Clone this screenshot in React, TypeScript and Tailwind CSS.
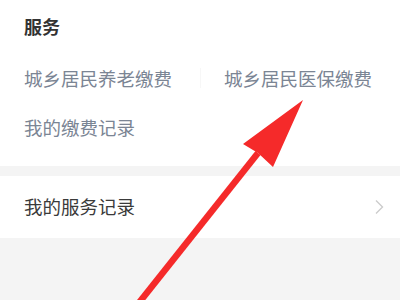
export default function App() {
  return (
    <div
      className="relative w-[400px] h-[300px] overflow-hidden bg-[#f4f4f4]"
      style={{ fontFamily: '"Noto Sans CJK SC", "Noto Sans", sans-serif' }}
    >
      {/* 服务 */}
      <div className="bg-white pt-[13px] pb-[26px]">
        <h2 className="px-6 text-[18px] leading-[26px] font-bold text-[#333]">服务</h2>
        <div className="mt-[26px] grid grid-cols-2 text-[18.5px] leading-[26px] text-[#7b8594]">
          <div className="pl-6">城乡居民养老缴费</div>
          <div className="relative pl-6">
            <span className="absolute left-0 top-[3px] h-[20px] w-px bg-[#f7f7f7]" />
            城乡居民医保缴费
          </div>
        </div>
        <div className="mt-[23px] px-6 text-[18.5px] leading-[26px] text-[#7b8594]">我的缴费记录</div>
      </div>

      {/* 我的服务记录 */}
      <div className="mt-[10px] flex h-[62px] items-center justify-between bg-white pl-6 pr-4">
        <span className="text-[18.5px] text-[#3a3a3a]">我的服务记录</span>
        <svg width="10" height="16" viewBox="0 0 10 16" fill="none">
          <path d="M2 1.5l6.5 6.5-6.5 6.5" stroke="#cccccc" strokeWidth="1.4" />
        </svg>
      </div>

      {/* arrow */}
      <svg className="absolute inset-0 pointer-events-none" width="400" height="300" viewBox="0 0 400 300">
        <line x1="258" y1="153" x2="138" y2="304" stroke="#f52a2a" strokeWidth="6.5" />
        <polygon points="303,100 243,144 258,153 273,167" fill="#f52a2a" />
      </svg>
    </div>
  );
}
